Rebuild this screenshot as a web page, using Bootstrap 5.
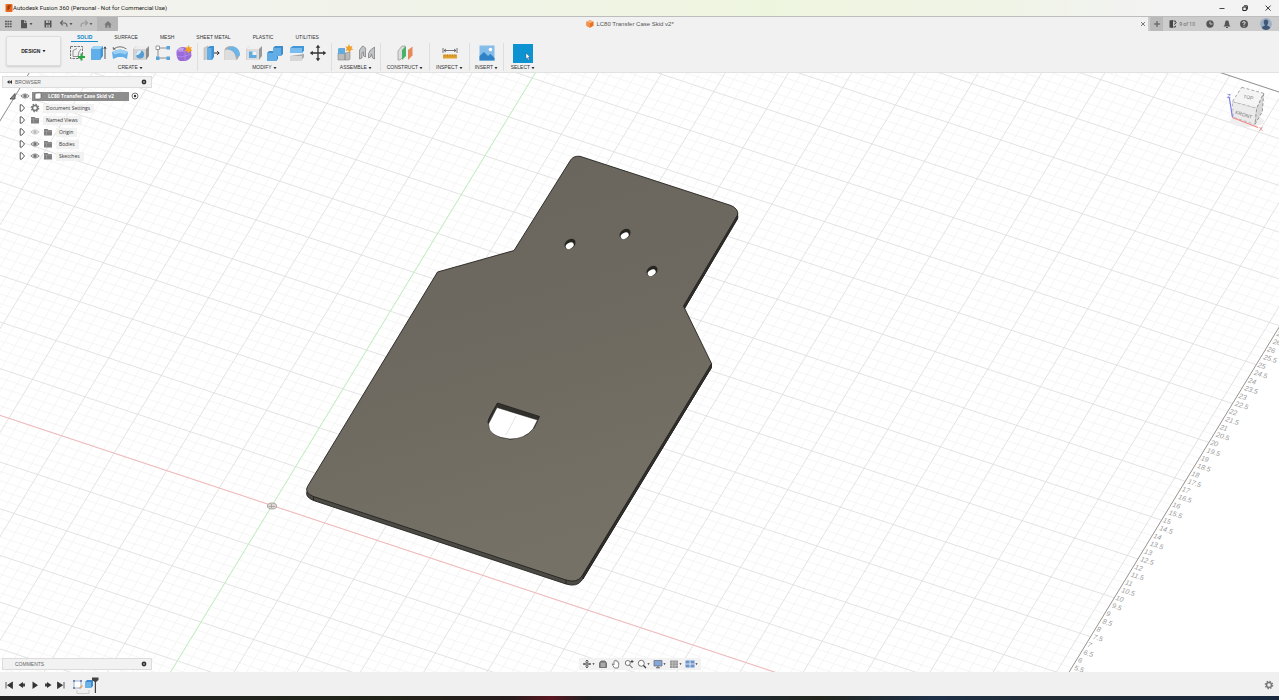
<!DOCTYPE html>
<html lang="en">
<head>
<meta charset="utf-8">
<meta name="viewport" content="width=device-width, initial-scale=1">
<title>Autodesk Fusion 360 (Personal - Not for Commercial Use)</title>
<link rel="stylesheet" href="https://cdn.jsdelivr.net/npm/bootstrap@5.3.0/dist/css/bootstrap.min.css">
<script src="https://cdn.jsdelivr.net/npm/bootstrap@5.3.0/dist/js/bootstrap.bundle.min.js"></script>
<style>
  body { font-family: "Liberation Sans", sans-serif; font-size: 5px; line-height: 8px; color: #333; background: #f0f0f0; }
  button { background: none; border: 0; padding: 0; color: inherit; font: inherit; line-height: inherit; }
  a { color: inherit; text-decoration: none; }
  svg { display: block; flex: none; }
  .i8 { width: 8px; height: 8px; }
  .i10 { width: 10px; height: 10px; }
  .i18 { width: 18px; height: 18px; }
  .caret { width: 4px; height: 4px; }
  .titlebar { height: 16px; padding: 0 6px 0 5px; font-family: Roboto, sans-serif; font-size: 6px; color: #222; background: linear-gradient(90deg, #f4f2ef 0, #f1f3ea 30%, #eef5df 60%, #f0f4e6 78%, #f3f3f3 90%); }
  .winbtns { gap: 13px; }
  .tabstrip { height: 15px; border-top: 1px solid #bdbdbd; background: #ccc; color: #555; }
  .quick { width: 97px; background: #c4c4c4; padding: 0 4px 0 3px; gap: 6px; }
  .hometab { width: 21px; background: #b5b5b5; }
  .doctab { background: #f1f1f1; font-size: 6px; margin-right: 2px; }
  .doclabel { gap: 2px; padding-left: 4px; }
  .plus { width: 13px; background: #bababa; }
  .status { padding: 0 7px 0 6px; font-family: "Open Sans", sans-serif; }
  .seats { margin: 0 10px 0 2px; }
  .accounts { gap: 7px; }
  .ribbon { height: 42px; background: #f1f1f1; border-bottom: 1px solid #e2e2e2; }
  .workspace { width: 55px; height: 30px; margin: 5px 3px 0 6px; background: #f3f3f3; border: 1px solid #ddd; border-radius: 2px; box-shadow: 0 1px 2px #ccc; color: #222; font-weight: bold; }
  .modes { gap: 22px; padding-left: 13px; height: 11px; }
  .modes a { padding-top: 2px; height: 11px; }
  .modes a.on { color: #0a84c6; font-weight: bold; position: relative; }
  .modes a.on::after { content: ""; position: absolute; left: -6px; right: -6px; bottom: 0; height: 1px; background: #1a8fd0; }
  .tools { height: 28px; margin-top: 1px; border-right: 1px solid #dedede; }
  .tools > div { padding: 0 4px; height: 20px; }
  .wide { width: 134px; } .mid { width: 49px; } .slim { width: 40px; } .thin { width: 34px; } .last { width: 38px; border: 0; }
  .stage { background: #fff; min-height: 0; }
  .scene { position: absolute; inset: 0; width: 100%; height: 100%; }
  .overlay { padding: 3px 2px 2px; }
  .panelbar { width: 150px; height: 12px; background: #f2f2f2; border: 1px solid #dcdcdc; color: #666; padding: 0 3px 0 4px; }
  .panelbar .first { padding-left: 3px; }
  .panelbar .only { padding-left: 8px; }
  .tree { margin-top: 2px; font-family: "Open Sans", sans-serif; }
  .tree li { height: 12px; gap: 3px; }
  .tree .root { padding-left: 6px; gap: 2px; }
  .tree .leaf { padding-left: 15px; }
  .lbl { background: #f2f2f2; padding: 0 4px 0 3px; line-height: 9px; }
  .rootlbl { background: #8d8d8d; color: #fff; font-weight: bold; width: 97px; height: 9px; gap: 6px; padding-left: 2px; }
  .navtools { background: #f2f2f2; height: 12px; padding: 0 3px; gap: 3px; }
  .navtools .caret { width: 3px; }
  .timeline { height: 24px; padding: 2px 5px 0 4px; background: #f0f0f0; }
  .play { gap: 3px; margin-right: 4px; }
  .taskbar { height: 4px; background: linear-gradient(90deg,#222 0 10%,#202418 28%,#281c1c 40%,#5a1620 43%,#202022 46%,#1b2c44 54%,#22251c 64%,#1d3048 73%,#222b33 82%,#18283e); }
</style>
</head>
<body class="vh-100 d-flex flex-column overflow-hidden">
<svg width="0" height="0" class="position-absolute" aria-hidden="true">
  <defs>
    <symbol id="down" viewBox="0 0 4 4"><path d="M.5 1h3L2 3.2z" fill="currentColor"/></symbol>
    <symbol id="eye" viewBox="0 0 10 10"><path d="M.8 5Q5 .8 9.2 5 5 9.2.8 5z" fill="#ddd" stroke="#888" stroke-width=".9"/><circle cx="5" cy="5" r="1.7" fill="#777"/></symbol>
    <symbol id="folder" viewBox="0 0 10 10"><path d="M1 2h3.5l1 1H9v5.500H1z" fill="#808080"/><path d="M1 4h8M3.500 4v4.500" stroke="#aaa" stroke-width=".6"/></symbol>
    <symbol id="open" viewBox="0 0 10 10"><path d="M3.200 1.800v6.400h1.500L7.500 5 4.700 1.800z" fill="#fff" stroke="#444" stroke-width=".9"/></symbol>
    <symbol id="gear" viewBox="0 0 10 10"><circle cx="5" cy="5" r="2.500" fill="none" stroke="#777" stroke-width="1.500"/><circle cx="5" cy="5" r="3.700" fill="none" stroke="#777" stroke-width="1.200" stroke-dasharray="1.500 1.400"/></symbol>
    <symbol id="dot" viewBox="0 0 8 8"><circle cx="4" cy="4" r="2.400" fill="#333"/><path d="M3 4h2" stroke="#fff" stroke-width=".7"/></symbol>
  </defs>
</svg>

<header class="titlebar d-flex align-items-center">
  <svg class="i8" viewBox="0 0 8 8"><rect x=".5" width="7" height="8" rx="1" fill="#e8661d"/><path d="M3 2h3M3 2v4M3 4h2" stroke="#7c2b08" stroke-width="1" fill="none"/></svg>
  <span>Autodesk Fusion 360 (Personal - Not for Commercial Use)</span>
  <div class="winbtns ms-auto d-flex">
    <button aria-label="Minimize"><svg class="i10" viewBox="0 0 10 10"><path d="M2.500 5.500h5" stroke="#333" stroke-width=".9"/></svg></button>
    <button aria-label="Restore"><svg class="i10" viewBox="0 0 10 10"><path d="M4 2.800h3.300V6.500M2.800 4h3.500v3.500H2.800z" fill="none" stroke="#222"/></svg></button>
    <button aria-label="Close"><svg class="i10" viewBox="0 0 10 10"><path d="M2.600 2.600l5 5M7.600 2.600l-5 5" stroke="#222" stroke-width=".9"/></svg></button>
  </div>
</header>

<nav class="tabstrip d-flex" aria-label="Documents">
  <div class="quick d-flex align-items-center">
    <button aria-label="Data panel"><svg class="i10" viewBox="0 0 10 10"><path d="M2 2.500h6.600M2 5h6.600M2 7.500h6.600" stroke="#555" stroke-width="1.700" stroke-dasharray="1.800 .6"/></svg></button>
    <button class="d-flex align-items-center" aria-label="File"><svg class="i10" viewBox="0 0 10 10"><path d="M2 1h3v3h3v5.300H2z" fill="#555"/><path d="M5.700 1L8 3.300H5.700z" fill="#555"/></svg><svg class="caret"><use href="#down"/></svg></button>
    <button class="ms-1" aria-label="Save"><svg class="i10" viewBox="0 0 10 10"><path d="M1.500 1.500h7v7h-7z" fill="#555"/><path d="M3 1.500h4v2.400H3zM3 5.800h4v2.700H3z" fill="#bbb"/><path d="M5.700 1.700v1.800M3.700 7h2.600" stroke="#555" stroke-width=".8"/></svg></button>
    <button class="d-flex align-items-center" aria-label="Undo"><svg class="i10" viewBox="0 0 10 10"><path d="M3.800 1.500L1.500 4l2.300 2.400M2 4h3.400Q8 4 8 7.700" fill="none" stroke="#666" stroke-width="1.200"/></svg><svg class="caret"><use href="#down"/></svg></button>
    <button class="d-flex align-items-center text-black-50" aria-label="Redo"><svg class="i10" viewBox="0 0 10 10"><path d="M6.200 1.500L8.500 4 6.200 6.400M8 4H4.600Q2 4 2 7.700" fill="none" stroke="#999" stroke-width="1.200"/></svg><svg class="caret"><use href="#down"/></svg></button>
  </div>
  <button class="hometab d-flex align-items-center justify-content-center" aria-label="Home"><svg class="i10" viewBox="0 0 10 10"><path d="M5 2L1.300 5.400h1v3.400h2V6.500h1.400v2.300h2V5.400h1z" fill="#777"/></svg></button>
  <div class="doctab flex-grow-1 d-flex align-items-center">
    <span class="doclabel flex-grow-1 d-flex align-items-center justify-content-center"><svg class="i8" viewBox="0 0 8 8"><path d="M4 .3l3.500 1.500v4L4 7.800.5 5.800v-4z" fill="#e8701f"/><path d="M.5 1.800L4 3.200v4.600L.5 5.800z" fill="#f4904a"/><path d="M.5 1.800L4 .3l3.500 1.500L4 3.200z" fill="#f9b176"/></svg><span>LC80 Transfer Case Skid v2*</span></span>
    <button aria-label="Close document"><svg class="i10" viewBox="0 0 10 10"><path d="M3 3l4 4M7 3L3 7" stroke="#555" stroke-width=".8"/></svg></button>
  </div>
  <button class="plus d-flex align-items-center justify-content-center" aria-label="New tab"><svg class="i8" viewBox="0 0 8 8"><path d="M4 1v6M1 4h6" stroke="#555"/></svg></button>
  <div class="status d-flex align-items-center">
    <svg class="i8" viewBox="0 0 8 8"><path d="M.5.5L4 0v8L.5 7.400z" fill="#444"/><path d="M4.400 1h2v1.500M4.400 7h2V5.700M5 4.500l2.600-2" stroke="#444" stroke-width="1" fill="none"/></svg>
    <span class="seats">9 of 10</span>
    <div class="accounts d-flex align-items-center">
    <button aria-label="Jobs"><svg class="i10" viewBox="0 0 10 10"><circle cx="5" cy="5" r="3.700" fill="#555"/><path d="M5 2.500V5h2.500" stroke="#ccc" fill="none"/></svg></button>
    <button aria-label="Notifications"><svg class="i10" viewBox="0 0 10 10"><path d="M1.500 7.500Q3 6 3 4q0-2.600 2-2.800Q7 1.400 7 4q0 2 1.500 3.500zM4 8h2v1H4z" fill="#555"/></svg></button>
    <button aria-label="Help"><svg class="i10" viewBox="0 0 10 10"><circle cx="5" cy="5" r="4" fill="#555"/><path d="M3.700 4Q3.800 2.600 5 2.700q1.400.1 1.300 1.300Q6 4.800 5 5.200V6M5 6.800v1" fill="none" stroke="#eee" stroke-width=".9"/></svg></button>
    <button class="ps-1" aria-label="Account"><svg width="12" height="12" viewBox="0 0 12 12"><circle cx="6" cy="6" r="6" fill="#9fb0c6"/><path d="M1.800 10Q2 8.300 4.700 7.800V7Q3.300 5.600 3.700 3.200 4.200 1.400 6 1.400t2.300 1.800Q8.700 5.600 7.300 7v.8Q10 8.300 10.200 10 8.500 12 6 12t-4.200-2z" fill="#3f5878"/></svg></button>
    </div>
  </div>
</nav>

<section class="ribbon d-flex flex-shrink-0" aria-label="Toolbar">
  <button class="workspace d-flex align-items-center justify-content-center">DESIGN&nbsp;<svg class="caret"><use href="#down"/></svg></button>
  <div>
    <nav class="modes d-flex" aria-label="Modes">
      <a href="#" class="on">SOLID</a><a href="#">SURFACE</a><a href="#">MESH</a><a href="#">SHEET METAL</a><a href="#">PLASTIC</a><a href="#">UTILITIES</a>
    </nav>
    <div class="d-flex">
      <div class="tools wide">
        <div class="d-flex justify-content-between">
          <button aria-label="Create sketch"><svg class="i18" viewBox="0 0 18 18"><path d="M2.500 2.500h12v12h-12z" fill="none" stroke="#666" stroke-width=".9" stroke-dasharray="2.500 1"/><path d="M5 12.500V6.500L9 4.500M5 12.500h5Q10.500 7 13 5" fill="none" stroke="#777" stroke-width=".8"/><path d="M13.500 9.500v7M10 13h7" stroke="#2aa745" stroke-width="2"/></svg></button>
          <button aria-label="Extrude"><svg class="i18" viewBox="0 0 18 18"><path d="M2 5l3-3h9v10l-3 4H2z" fill="#3f96d8"/><path d="M2 5h9.500v11H2z" fill="#62aee8"/><path d="M2 5l3-3h9l-2.500 3z" fill="#a6d4f5"/><path d="M16 15V3M14.800 5L16 2.800 17.200 5" stroke="#333" stroke-width=".8" fill="none"/></svg></button>
          <button aria-label="Revolve"><svg class="i18" viewBox="0 0 18 18"><path d="M1 8q8-5 16 0l-1 7-4-2H7l-5 2z" fill="#62aee8"/><path d="M1 8q8-5 16 0l-3 2.500q-5-2.500-10 0z" fill="#9dcff3"/><path d="M2.500 5Q9 .5 15.500 5M2.300 3v2.300l2.200-.2" fill="none" stroke="#555" stroke-width=".8"/></svg></button>
          <button aria-label="Hole"><svg class="i18" viewBox="0 0 18 18"><path d="M1.500 5l3-3H17v10l-3 4H1.500z" fill="#8c8c8c"/><path d="M1.500 5h12.500v11H1.500z" fill="#d3d3d3"/><path d="M1.500 5l3-3H17l-3 3z" fill="#eee"/><circle cx="8" cy="10.500" r="4" fill="#539dd2"/><path d="M4.200 11.500a4 4 0 0 1 5-5Q9 10 4.200 11.500z" fill="#d9edfa"/></svg></button>
          <button aria-label="Pattern"><svg class="i18" viewBox="0 0 18 18"><path d="M4 4h10M4 4v10h10" fill="none" stroke="#777" stroke-width=".8"/><path d="M2 2h3.500v3.500H2z" fill="#fff" stroke="#777" stroke-width=".7"/><path d="M12.500 2H16v3.500h-3.500zM2 12.500h3.500V16H2zM12.500 12.500H16V16h-3.500z" fill="#57a5dc"/></svg></button>
          <button aria-label="Create form"><svg class="i18" viewBox="0 0 18 18"><path d="M1.500 7Q2 5 5 3.500q4-1 6 .5 5 .5 5 3l.5 5q-2 4-6 5H5q-4-2-3.500-10z" fill="#9a6bd8"/><path d="M2 7q4 1.500 8 0v9.500M2 12q4 2 8 0l6-2" fill="none" stroke="#b88ff0" stroke-width=".8"/><path d="M3 5q3-2 6-1l-1 3-5-.5z" fill="#c6a5ef"/><path d="M13.500 1l1 2.500L17 3l-1.200 2L17.500 7l-2.500.2L13.500 9.500 12 7.200 9.500 7 11.200 5 10 3l2.500.5z" fill="#f4a124"/></svg></button>
        </div>
        <button class="d-block mx-auto">CREATE <svg class="d-inline-block caret"><use href="#down"/></svg></button>
      </div>
      <div class="tools wide">
        <div class="d-flex justify-content-between">
          <button aria-label="Press pull"><svg class="i18" viewBox="0 0 18 18"><path d="M2 4l4-2v12l-4 2z" fill="#ccc" stroke="#aaa" stroke-width=".5"/><path d="M5 4l3-2h4v11l-2 3H5z" fill="#3e91d1"/><path d="M5 4h4.500v12H5z" fill="#64afe6"/><path d="M12 9h5M15 7.200L17.200 9 15 10.800" stroke="#333" fill="none"/></svg></button>
          <button aria-label="Fillet"><svg class="i18" viewBox="0 0 18 18"><path d="M1.500 6Q3 2 8 2q8 1 9 9l-3 5H1.500z" fill="#aaa"/><path d="M1.500 7Q2 5 5 5.500q7 0 8.500 10.500H1.500z" fill="#ddd"/><path d="M5 4l5-1.800q7 1.800 7 9L13 13Q12 6 5 5.500z" fill="#6bb5e9"/></svg></button>
          <button aria-label="Shell"><svg class="i18" viewBox="0 0 18 18"><path d="M1.500 5l3-3H17v10l-3 4H1.500z" fill="#999"/><path d="M1.500 5h12.500v11H1.500z" fill="#ddd"/><path d="M1.500 5l3-3H17l-3 3z" fill="#f0f0f0"/><path d="M4 7.500h7.500V14H4z" fill="#61abe0"/><path d="M7.500 7.500h4V11h-4z" fill="#f4f4f4"/></svg></button>
          <button aria-label="Combine"><svg class="i18" viewBox="0 0 18 18"><path d="M1 9l2-2h4V4l2-2h8v8l-2 2h-3v3l-2 2H1z" fill="#3c8dce"/><path d="M1 9h6V4h8v8h-4v5H1z" fill="#62ade5"/></svg></button>
          <button aria-label="Split body"><svg class="i18" viewBox="0 0 18 18"><path d="M2 4l3-2h11v5l-2 3H2z" fill="#4297d6"/><path d="M2 4h12v5H2z" fill="#7abced"/><path d="M2 12l14-2v3l-3 4H2z" fill="#aaa"/><path d="M2 12h12v5H2z" fill="#d8d8d8"/><path d="M1 9.500h13l3-3" stroke="#eaf6ff" fill="none"/></svg></button>
          <button aria-label="Move"><svg class="i18" viewBox="0 0 18 18"><path d="M9 2.500v13M2.500 9h13" stroke="#333" stroke-width="1.300"/><path d="M9 .8L6.700 3.800h4.600zM9 17.200l-2.300-3h4.600zM.8 9l3-2.300v4.600zM17.200 9l-3-2.300v4.600z" fill="#333"/></svg></button>
        </div>
        <button class="d-block mx-auto">MODIFY <svg class="d-inline-block caret"><use href="#down"/></svg></button>
      </div>
      <div class="tools mid">
        <div class="d-flex justify-content-between">
          <button aria-label="New component"><svg class="i18" viewBox="0 0 18 18"><path d="M2 9h7v7H2zM9 9l5-1v7l-1 1H9z" fill="#bbb" stroke="#888" stroke-width=".6"/><path d="M2 5l1-1h6v6H2z" fill="#60abe0"/><path d="M13 0l1 2.500L16.500 2l-1 2.200 2 1.300-2.500.6L13.500 9l-1.200-2.500-2.800.3 1.300-2.200-1.500-2 2.500.2z" fill="#f0a02c"/></svg></button>
          <button aria-label="Joint"><svg class="i18" viewBox="0 0 18 18"><path d="M1.500 15V6l3-4q4 1 3 5v6l-2-1V8L4 9v5zM16.500 15V3l-4 3q-3 3-2 8l2-1 1-3 1 4z" fill="#c2c5c7" stroke="#777" stroke-width=".7"/></svg></button>
        </div>
        <button class="d-block mx-auto text-nowrap">ASSEMBLE <svg class="d-inline-block caret"><use href="#down"/></svg></button>
      </div>
      <div class="tools mid">
        <div class="d-flex justify-content-center"><button aria-label="Offset plane"><svg class="i18" viewBox="0 0 18 18"><path d="M2 7l4-5h3v9l-5 5H2z" fill="#ddd" stroke="#888" stroke-width=".6"/><path d="M6 6l4-4v10l-4 4z" fill="#47b369"/><path d="M12 6l4.500-3.500v9L12 16z" fill="#e68a5c"/></svg></button></div>
        <button class="d-block mx-auto text-nowrap">CONSTRUCT <svg class="d-inline-block caret"><use href="#down"/></svg></button>
      </div>
      <div class="tools slim">
        <div class="d-flex justify-content-center"><button aria-label="Measure"><svg class="i18" viewBox="0 0 18 18"><path d="M2 4v5M16 4v5M3 6.500h12M5 5L3 6.500 5 8M13 5l2 1.500L13 8" stroke="#555" stroke-width=".8" fill="none"/><path d="M2 10.500h14v4H2z" fill="#e2a22e"/><path d="M4 10.500v2M6.500 10.500v2M9 10.500v2M11.500 10.500v2M14 10.500v2" stroke="#8d6414" stroke-width=".5"/></svg></button></div>
        <button class="d-block mx-auto text-nowrap">INSPECT <svg class="d-inline-block caret"><use href="#down"/></svg></button>
      </div>
      <div class="tools thin">
        <div class="d-flex justify-content-center"><button aria-label="Insert image"><svg class="i18" viewBox="0 0 18 18"><path d="M1.500 1.500h15v15h-15z" fill="#84bdea"/><path d="M1.500 12l4.500-4 4 4 2.500-2 4 4v2.500h-15z" fill="#2f82c5"/><circle cx="12.500" cy="5.500" r="1.800" fill="#fff"/></svg></button></div>
        <button class="d-block mx-auto text-nowrap">INSERT <svg class="d-inline-block caret"><use href="#down"/></svg></button>
      </div>
      <div class="tools last">
        <div class="d-flex justify-content-center"><button aria-label="Select"><svg class="i18 overflow-visible" viewBox="0 0 18 18"><path d="M-1 0h20v19H-1z" fill="#0d93d2"/><path d="M12 9l4 4-1.800.2 1 2.200-1 .5-1-2.200-1.200 1.200z" fill="#fff" stroke="#345" stroke-width=".4"/></svg></button></div>
        <button class="d-block mx-auto text-nowrap">SELECT <svg class="d-inline-block caret"><use href="#down"/></svg></button>
      </div>
    </div>
  </div>
</section>

<main class="stage flex-grow-1 position-relative overflow-hidden">
  <svg class="scene" viewBox="0 73 1279 599" preserveAspectRatio="xMidYMid slice" role="img" aria-label="Skid plate model">
    <defs>
      <linearGradient id="steel" x1="0" y1="0" x2=".3" y2="1"><stop offset="0" stop-color="#69655c"/><stop offset=".5" stop-color="#6d6960"/><stop offset="1" stop-color="#757166"/></linearGradient>
      <path id="outline" d="M570 161Q573 155.500 580 156.300L731 205.500Q739 209 737.500 215L683.500 306 711.500 363.500 582 576Q577 583.500 566 580L313.500 496.500Q304 492.500 307.500 486.500L437.500 272 514 250.500z"/>
    </defs>
    <path id="minor" fill="none" stroke="#f3f3f3" stroke-width=".8"/>
    <path id="major" fill="none" stroke="#dcdcdc" stroke-width=".8"/>
    <path id="border" fill="none" stroke="#8a8a8a" stroke-width=".9"/>
    <path id="axisx" stroke="#f7b3b3" stroke-width=".9"/>
    <path id="axisy" stroke="#bdf3bd" stroke-width=".9"/>
    <g id="ruler" font-family="Liberation Sans, sans-serif" font-style="italic" font-size="7" fill="#999"></g>
    <ellipse cx="272" cy="506" rx="4.500" ry="3" fill="#ddd8d3" stroke="#99928c" stroke-width=".8"/><path d="M269 506.500h6M271.500 504v4" stroke="#999" stroke-width=".7"/>
    <g stroke="#24231f" stroke-width=".9" stroke-linejoin="round">
      <use href="#outline" y="4" fill="#4c4a44"/>
      <path d="M737.700 213.500v4L684 309.500 683.500 306zM711.500 363.500v4L583 579V575z" fill="#34322e"/>
      <use href="#outline" fill="url(#steel)"/>
      <path d="M313.500 496.500v4M566 580v4" fill="none"/>
      <path d="M497.500 403L539.500 416.500 534 428Q525 439 510 439 488 437 488 421.500 488.500 418 497.500 403z" fill="#32302c"/>
      <path d="M497 407.500L537.500 420 533 429Q525 439 510 439 488 437 488.500 424z" fill="#fff" stroke-width=".5"/>
    </g>
    <path d="M506 435L516 416" stroke="#ddd" stroke-width=".8"/>
    <g id="bolts"></g>
    <g stroke-width="1" stroke-linejoin="round">
      <ellipse cx="1247" cy="121" rx="17" ry="6" fill="#efefef"/>
      <path d="M1241.700 87.300L1263.700 93.300 1256.700 108.300 1232.300 101.700z" fill="#f4f4f4" stroke="#aaa" stroke-dasharray="3 2"/>
      <path d="M1232.300 101.700L1256.700 108.300 1255 124.300 1233.300 117.300z" fill="#ebebeb" stroke="#bbb" stroke-dasharray="3 2"/>
      <path d="M1263.700 93.300L1262.300 111.700 1255 124.300 1256.700 108.300z" fill="#d8d8d8" stroke="#999" stroke-dasharray="3 2"/>
      <path d="M1229.300 97.500L1232.500 117.500" stroke="#7777e8" stroke-width="1.200"/><path d="M1232.500 117.500L1258 127.500" stroke="#e88" stroke-width="1.200"/>
    </g>
    <g font-family="Liberation Sans, sans-serif" fill="#777" font-size="5">
      <text transform="translate(1243 98) rotate(12)">TOP</text>
      <text transform="translate(1235 114) rotate(16)">FRONT</text>
      <text x="1227" y="98" font-size="6" fill="#6a6ae0">Z</text>
      <text x="1259" y="131" font-size="6" fill="#e66">X</text>
    </g>
  </svg>

  <div class="overlay position-relative h-100 d-flex flex-column">
    <aside>
      <div class="panelbar d-flex align-items-center">
        <button aria-label="Collapse"><svg width="5" height="6" viewBox="0 0 5 6"><path d="M2.500 1v4L0 3zM5 1v4L2.500 3z" fill="#333"/></svg></button>
        <span class="first flex-grow-1">BROWSER</span>
        <button aria-label="Panel options"><svg class="i8"><use href="#dot"/></svg></button>
      </div>
      <ul class="tree list-unstyled mb-0">
        <li class="root d-flex align-items-center"><svg class="i10" viewBox="0 0 10 10"><path d="M2 8L7 2.500V8z" fill="#888" stroke="#444" stroke-width=".8"/></svg><svg class="i10"><use href="#eye"/></svg><span class="rootlbl d-flex align-items-center ms-0"><svg class="i8" viewBox="0 0 8 8"><path d="M1 2.500L2.500 1H7v4.500L5.500 7H1z" fill="#fff" stroke="#555" stroke-width=".6"/></svg>LC80 Transfer Case Skid v2</span><svg class="i8" viewBox="0 0 8 8"><circle cx="4" cy="4" r="3" fill="#fff" stroke="#555" stroke-width=".8"/><circle cx="4" cy="4" r="1.200" fill="#333"/></svg></li>
        <li class="leaf d-flex align-items-center"><svg class="i10"><use href="#open"/></svg><svg class="i10"><use href="#gear"/></svg><span class="lbl">Document Settings</span></li>
        <li class="leaf d-flex align-items-center"><svg class="i10"><use href="#open"/></svg><svg class="i10"><use href="#folder"/></svg><span class="lbl">Named Views</span></li>
        <li class="leaf d-flex align-items-center"><svg class="i10"><use href="#open"/></svg><svg class="i10 opacity-50"><use href="#eye"/></svg><svg class="i10"><use href="#folder"/></svg><span class="lbl">Origin</span></li>
        <li class="leaf d-flex align-items-center"><svg class="i10"><use href="#open"/></svg><svg class="i10"><use href="#eye"/></svg><svg class="i10"><use href="#folder"/></svg><span class="lbl">Bodies</span></li>
        <li class="leaf d-flex align-items-center"><svg class="i10"><use href="#open"/></svg><svg class="i10"><use href="#eye"/></svg><svg class="i10"><use href="#folder"/></svg><span class="lbl">Sketches</span></li>
      </ul>
    </aside>
    <div class="mt-auto row g-0 align-items-end">
      <div class="col"><div class="panelbar d-flex align-items-center"><span class="only flex-grow-1">COMMENTS</span><button aria-label="Comment options"><svg class="i8"><use href="#dot"/></svg></button></div></div>
      <div class="col-auto"><div class="navtools d-flex align-items-center" role="toolbar" aria-label="Navigation">
        <button class="d-flex align-items-center" aria-label="Orbit"><svg class="i10" viewBox="0 0 10 10"><path d="M1 5q4-2.500 8 0-4 2.500-8 0zM5 1v8M3.500 2.500L5 1l1.500 1.500M3.500 7.500L5 9l1.500-1.500" fill="none" stroke="#555" stroke-width=".9"/></svg><svg class="caret"><use href="#down"/></svg></button>
        <button aria-label="Look at"><svg class="i10" viewBox="0 0 10 10"><path d="M1.500 4l1.500-2h4l1.500 2v4.500h-7z" fill="#888" stroke="#555" stroke-width=".7"/><path d="M3 5h4M3 7h4" stroke="#ddd" stroke-width=".8"/></svg></button>
        <button aria-label="Pan"><svg class="i10" viewBox="0 0 10 10"><path d="M3.500 9Q2 7 1.200 5q.8-.8 1.800.8V2.200q.7-.8 1.200 0V1.500q.8-.8 1.300 0v.7q.8-.6 1.200.2v.8q1-.5 1 .5Q8 7 7 9z" fill="#fff" stroke="#666" stroke-width=".8"/></svg></button>
        <button aria-label="Zoom"><svg class="i10" viewBox="0 0 10 10"><circle cx="3.800" cy="4" r="2.500" fill="#fff" stroke="#666" stroke-width=".9"/><path d="M5.500 6l3 3M8 1v3M6.500 2.500h3" stroke="#444"/></svg></button>
        <button class="d-flex align-items-center" aria-label="Zoom window"><svg class="i10" viewBox="0 0 10 10"><circle cx="4.300" cy="4.300" r="3" fill="#fff" stroke="#666" stroke-width=".9"/><path d="M6.500 6.500l2.500 2.500" stroke="#333" stroke-width="1.300"/></svg><svg class="caret"><use href="#down"/></svg></button>
        <button class="d-flex align-items-center" aria-label="Display settings"><svg class="i10" viewBox="0 0 10 10"><path d="M1 1.500h8v5.500H1z" fill="#84a7d8" stroke="#667" stroke-width=".7"/><path d="M3 8.800h4M5 7v2" stroke="#666"/></svg><svg class="caret"><use href="#down"/></svg></button>
        <button class="d-flex align-items-center" aria-label="Grid and snaps"><svg class="i10" viewBox="0 0 10 10"><path d="M1 1.500h8v7.500H1z" fill="#999"/><path d="M3.500 1.500V9M6.200 1.500V9M1 4h8M1 6.500h8" stroke="#c4c4c4" stroke-width=".6"/></svg><svg class="caret"><use href="#down"/></svg></button>
        <button class="d-flex align-items-center" aria-label="Viewports"><svg class="i10" viewBox="0 0 10 10"><path d="M.5 1.500h9v7h-9z" fill="#6d93c8"/><path d="M5 1.500v7M.5 5h9" stroke="#dde8f8"/></svg><svg class="caret"><use href="#down"/></svg></button>
      </div></div>
      <div class="col"></div>
    </div>
  </div>
</main>

<footer>
  <div class="timeline d-flex align-items-center">
    <div class="play d-flex">
      <button aria-label="Go to start"><svg class="i10" viewBox="0 0 10 10"><path d="M2 2v6.500M8.500 2v6.500L3.500 5.200z" fill="#333" stroke="#333" stroke-width=".8"/></svg></button>
      <button aria-label="Step back"><svg class="i10" viewBox="0 0 10 10"><path d="M6 2v6L1.500 5z" fill="#333"/><path d="M6 3.500h2v3H6z" fill="#444"/></svg></button>
      <button aria-label="Play"><svg class="i10" viewBox="0 0 10 10"><path d="M2.500 1.500v7.500L8 5.200z" fill="#333"/></svg></button>
      <button aria-label="Step forward"><svg class="i10" viewBox="0 0 10 10"><path d="M4 2v6l4.500-3z" fill="#333"/><path d="M2 3.500h2v3H2z" fill="#444"/></svg></button>
      <button aria-label="Go to end"><svg class="i10" viewBox="0 0 10 10"><path d="M8 2v6.500M1.500 2v6.500L6.500 5.200z" fill="#333" stroke="#333" stroke-width=".8"/></svg></button>
    </div>
    <button aria-label="Timeline features"><svg width="30" height="20" viewBox="0 0 30 20"><path d="M4 6h7v7H4z" fill="#fff" stroke="#7f9fc8" stroke-width=".8"/><path d="M3 5h2v2H3zM10 5h2v2h-2zM3 12h2v2H3z" fill="#7a86b0"/><path d="M9 13l3-3 1 1-3 3z" fill="#e9a15c"/><path d="M15 7l2-2h6v6l-2 2h-6z" fill="#3e8ccd"/><path d="M15 7h6v6h-6z" fill="#6cb1e8"/><path d="M7 15v3.500h12V15" fill="none" stroke="#bbb" stroke-width=".7"/><path d="M22 2.500h6.500v2.500L26 7v11h-1.200V7L22 5z" fill="#444"/></svg></button>
    <button class="ms-auto" aria-label="Timeline settings"><svg class="i10"><use href="#gear"/></svg></button>
  </div>
  <div class="taskbar"></div>
</footer>

<script>
  // Work plane: origin plus one vector per major cell along each axis.
  const O = [272, 505.5], X = [52.65, 17.45], Y = [23.66, -38.86];
  const A0 = -8, A1 = 14.2, B0 = -18, B1 = 16;
  const pt = (a, b) => (O[0] + a * X[0] + b * Y[0]).toFixed(2) + ' ' + (O[1] + a * X[1] + b * Y[1]).toFixed(2);
  const seg = (a, b, c, d) => 'M' + pt(a, b) + 'L' + pt(c, d);
  let minor = '', major = '';
  for (let i = A0 * 5; i <= A1 * 5; i++) { const s = seg(i / 5, B0, i / 5, B1); if (i % 5) minor += s; else major += s; }
  for (let j = B0 * 5; j <= B1 * 5; j++) { const s = seg(A0, j / 5, A1, j / 5); if (j % 5) minor += s; else major += s; }
  const set = (id, d) => document.getElementById(id).setAttribute('d', d);
  set('minor', minor); set('major', major);
  set('border', seg(A0, B0, A0, B1) + seg(A0, B1, A1, B1) + seg(A1, B0, A1, B1));
  set('axisx', seg(A0, 0, A1, 0)); set('axisy', seg(0, B0, 0, B1));
  // Half steps sit a little further from the edge than whole ones.
  let ruler = '';
  for (let n = 5.5; n <= 27; n += 0.5) {
    const b = n / 2.5, x = O[0] + A1 * X[0] + b * Y[0] + (n % 1 ? 2 : 1), y = O[1] + A1 * X[1] + b * Y[1] + 2;
    ruler += `<text transform="translate(${x.toFixed(1)} ${y.toFixed(1)}) rotate(18)">${n}</text>`;
  }
  document.getElementById('ruler').innerHTML = ruler;
  document.getElementById('bolts').innerHTML = [[570, 244], [625, 234], [652, 271]].map(([x, y]) =>
    `<g transform="translate(${x} ${y}) rotate(-38)"><ellipse rx="6" ry="4.600" fill="#26251f"/></g><g transform="translate(${x - .3} ${y + 1.7}) rotate(-30)"><ellipse rx="4.300" ry="2.900" fill="#fff"/></g>`).join('');
</script>
</body>
</html>
